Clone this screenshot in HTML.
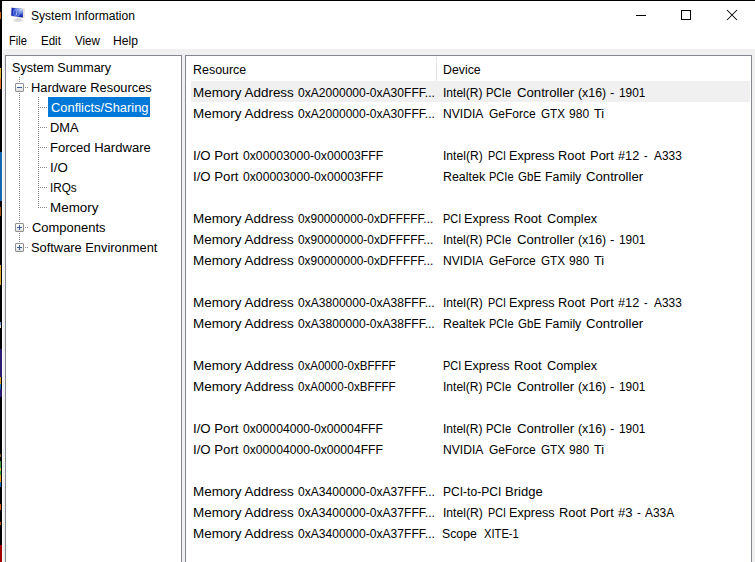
<!DOCTYPE html>
<html><head><meta charset="utf-8"><style>
*{margin:0;padding:0;box-sizing:border-box}
html,body{width:755px;height:562px;overflow:hidden;background:#f0f0f0}
body{position:relative;font-family:"Liberation Sans",sans-serif;font-size:12px;color:#000}
.a{position:absolute}
.t{position:absolute;white-space:pre;transform-origin:0 0;line-height:14px}
</style></head><body>
<div class="a" style="left:0;top:0;width:755px;height:49px;background:#fff"></div>
<div class="a" style="left:0;top:0;width:755px;height:1px;background:#000"></div>
<div class="a" style="left:0;top:0;width:2px;height:562px;background:#000"></div>
<div class="a" style="left:2px;top:49px;width:1px;height:513px;background:#fff"></div>
<div class="a" style="left:5px;top:55px;width:177px;height:520px;border:1px solid #828790;background:#fff"></div>
<div class="a" style="left:185px;top:55px;width:567px;height:520px;border:1px solid #828790;background:#fff"></div>
<div class="a" style="left:436px;top:57px;width:1px;height:24px;background:#e5e5e5"></div>
<div class="a" style="left:191px;top:81px;width:559px;height:21px;background:#f0f0f0"></div>
<div class="a" style="left:48px;top:97px;width:102px;height:20px;background:#0078d7"></div>
<div class="a" style="left:0px;top:12px;width:1px;height:7px;background:#c06010"></div>
<div class="a" style="left:0px;top:68px;width:1px;height:10px;background:#e0b030"></div>
<div class="a" style="left:0px;top:78px;width:1px;height:11px;background:#e07030"></div>
<div class="a" style="left:0px;top:152px;width:2px;height:49px;background:#1565b0"></div>
<div class="a" style="left:0px;top:207px;width:1px;height:9px;background:#a05010"></div>
<div class="a" style="left:0px;top:265px;width:1px;height:20px;background:#d8a830"></div>
<div class="a" style="left:0px;top:322px;width:1px;height:3px;background:#60a0e0"></div>
<div class="a" style="left:0px;top:325px;width:1px;height:3px;background:#e0d0c0"></div>
<div class="a" style="left:0px;top:349px;width:2px;height:28px;background:#2a1a70"></div>
<div class="a" style="left:0px;top:377px;width:1px;height:7px;background:#d8a030"></div>
<div class="a" style="left:0px;top:384px;width:1px;height:5px;background:#2070c0"></div>
<div class="a" style="left:0px;top:389px;width:2px;height:8px;background:#2a1a70"></div>
<div class="a" style="left:0px;top:454px;width:1px;height:3px;background:#806010"></div>
<div class="a" style="left:0px;top:461px;width:1px;height:7px;background:#30a040"></div>
<div class="a" style="left:0px;top:468px;width:1px;height:3px;background:#d0c040"></div>
<div class="a" style="left:0px;top:471px;width:1px;height:4px;background:#30a040"></div>
<div class="a" style="left:0px;top:475px;width:1px;height:7px;background:#e0a020"></div>
<div class="a" style="left:0px;top:482px;width:1px;height:5px;background:#2070c0"></div>
<div class="a" style="left:0px;top:504px;width:1px;height:6px;background:#d06010"></div>
<div class="a" style="left:0px;top:522px;width:1px;height:3px;background:#c05010"></div>
<div class="a" style="left:0px;top:545px;width:2px;height:17px;background:#a00000"></div>
<svg class="a" style="left:8px;top:5px" width="20" height="20" viewBox="0 0 20 20">
<defs><linearGradient id="scr" x1="0" y1="0.3" x2="1" y2="0.7"><stop offset="0" stop-color="#1828b8"/><stop offset="0.55" stop-color="#2848d0"/><stop offset="1" stop-color="#0818a8"/></linearGradient>
<radialGradient id="hl" cx="0.85" cy="0.15" r="0.75"><stop offset="0" stop-color="#d0dcf8"/><stop offset="0.45" stop-color="#90a8ec" stop-opacity="0.8"/><stop offset="1" stop-color="#4060d8" stop-opacity="0"/></radialGradient>
<radialGradient id="st" cx="0.5" cy="0.4" r="0.6"><stop offset="0" stop-color="#cfcfcf"/><stop offset="1" stop-color="#ececec"/></radialGradient></defs>
<ellipse cx="10.2" cy="15.2" rx="4.9" ry="2.0" fill="url(#st)"/>
<rect x="9" y="12.5" width="2.5" height="2" fill="#d8d8d8"/>
<path d="M2.9 2.2 L16.8 3.5 L16.6 13.4 L2.6 11.2 Z" fill="#e6e2da"/>
<path d="M3.6 2.8 L15.0 4.0 L14.8 12.5 L3.2 10.7 Z" fill="url(#scr)"/>
<path d="M3.6 2.8 L15.0 4.0 L14.8 12.5 L3.2 10.7 Z" fill="url(#hl)"/>
<ellipse cx="8.7" cy="7.6" rx="3.3" ry="3.5" fill="none" stroke="#88a4e8" stroke-width="0.8" opacity="0.85"/>
<path d="M7.4 4.6 Q6.4 7.6 7.6 10.6 M10.0 4.6 Q11.0 7.6 9.8 10.6" fill="none" stroke="#7894e0" stroke-width="0.6" opacity="0.7"/>
<path d="M8.5 5.0 L9.1 5.0 L8.9 7.5 L8.4 7.5 Z" fill="#b8c8f4" opacity="0.8"/><path d="M8.4 7.5 L9.0 7.5 L8.8 10.0 L8.2 9.9 Z" fill="#f8faff"/>
</svg>
<div class="a" style="left:636px;top:15px;width:10px;height:1px;background:#000"></div>
<div class="a" style="left:681px;top:10px;width:10px;height:10px;border:1px solid #000"></div>
<svg class="a" style="left:726px;top:9px" width="12" height="12" viewBox="0 0 12 12"><path d="M1 1 L11 11 M11 1 L1 11" stroke="#000" stroke-width="1.05"/></svg>
<svg class="a" style="left:0;top:0" width="755" height="562"><rect x="19" y="77" width="1" height="1" fill="#8a8a8a"/><rect x="19" y="79" width="1" height="1" fill="#8a8a8a"/><rect x="19" y="81" width="1" height="1" fill="#8a8a8a"/><rect x="19" y="93" width="1" height="1" fill="#8a8a8a"/><rect x="19" y="95" width="1" height="1" fill="#8a8a8a"/><rect x="19" y="97" width="1" height="1" fill="#8a8a8a"/><rect x="19" y="99" width="1" height="1" fill="#8a8a8a"/><rect x="19" y="101" width="1" height="1" fill="#8a8a8a"/><rect x="19" y="103" width="1" height="1" fill="#8a8a8a"/><rect x="19" y="105" width="1" height="1" fill="#8a8a8a"/><rect x="19" y="107" width="1" height="1" fill="#8a8a8a"/><rect x="19" y="109" width="1" height="1" fill="#8a8a8a"/><rect x="19" y="111" width="1" height="1" fill="#8a8a8a"/><rect x="19" y="113" width="1" height="1" fill="#8a8a8a"/><rect x="19" y="115" width="1" height="1" fill="#8a8a8a"/><rect x="19" y="117" width="1" height="1" fill="#8a8a8a"/><rect x="19" y="119" width="1" height="1" fill="#8a8a8a"/><rect x="19" y="121" width="1" height="1" fill="#8a8a8a"/><rect x="19" y="123" width="1" height="1" fill="#8a8a8a"/><rect x="19" y="125" width="1" height="1" fill="#8a8a8a"/><rect x="19" y="127" width="1" height="1" fill="#8a8a8a"/><rect x="19" y="129" width="1" height="1" fill="#8a8a8a"/><rect x="19" y="131" width="1" height="1" fill="#8a8a8a"/><rect x="19" y="133" width="1" height="1" fill="#8a8a8a"/><rect x="19" y="135" width="1" height="1" fill="#8a8a8a"/><rect x="19" y="137" width="1" height="1" fill="#8a8a8a"/><rect x="19" y="139" width="1" height="1" fill="#8a8a8a"/><rect x="19" y="141" width="1" height="1" fill="#8a8a8a"/><rect x="19" y="143" width="1" height="1" fill="#8a8a8a"/><rect x="19" y="145" width="1" height="1" fill="#8a8a8a"/><rect x="19" y="147" width="1" height="1" fill="#8a8a8a"/><rect x="19" y="149" width="1" height="1" fill="#8a8a8a"/><rect x="19" y="151" width="1" height="1" fill="#8a8a8a"/><rect x="19" y="153" width="1" height="1" fill="#8a8a8a"/><rect x="19" y="155" width="1" height="1" fill="#8a8a8a"/><rect x="19" y="157" width="1" height="1" fill="#8a8a8a"/><rect x="19" y="159" width="1" height="1" fill="#8a8a8a"/><rect x="19" y="161" width="1" height="1" fill="#8a8a8a"/><rect x="19" y="163" width="1" height="1" fill="#8a8a8a"/><rect x="19" y="165" width="1" height="1" fill="#8a8a8a"/><rect x="19" y="167" width="1" height="1" fill="#8a8a8a"/><rect x="19" y="169" width="1" height="1" fill="#8a8a8a"/><rect x="19" y="171" width="1" height="1" fill="#8a8a8a"/><rect x="19" y="173" width="1" height="1" fill="#8a8a8a"/><rect x="19" y="175" width="1" height="1" fill="#8a8a8a"/><rect x="19" y="177" width="1" height="1" fill="#8a8a8a"/><rect x="19" y="179" width="1" height="1" fill="#8a8a8a"/><rect x="19" y="181" width="1" height="1" fill="#8a8a8a"/><rect x="19" y="183" width="1" height="1" fill="#8a8a8a"/><rect x="19" y="185" width="1" height="1" fill="#8a8a8a"/><rect x="19" y="187" width="1" height="1" fill="#8a8a8a"/><rect x="19" y="189" width="1" height="1" fill="#8a8a8a"/><rect x="19" y="191" width="1" height="1" fill="#8a8a8a"/><rect x="19" y="193" width="1" height="1" fill="#8a8a8a"/><rect x="19" y="195" width="1" height="1" fill="#8a8a8a"/><rect x="19" y="197" width="1" height="1" fill="#8a8a8a"/><rect x="19" y="199" width="1" height="1" fill="#8a8a8a"/><rect x="19" y="201" width="1" height="1" fill="#8a8a8a"/><rect x="19" y="203" width="1" height="1" fill="#8a8a8a"/><rect x="19" y="205" width="1" height="1" fill="#8a8a8a"/><rect x="19" y="207" width="1" height="1" fill="#8a8a8a"/><rect x="19" y="209" width="1" height="1" fill="#8a8a8a"/><rect x="19" y="211" width="1" height="1" fill="#8a8a8a"/><rect x="19" y="213" width="1" height="1" fill="#8a8a8a"/><rect x="19" y="215" width="1" height="1" fill="#8a8a8a"/><rect x="19" y="217" width="1" height="1" fill="#8a8a8a"/><rect x="19" y="219" width="1" height="1" fill="#8a8a8a"/><rect x="19" y="221" width="1" height="1" fill="#8a8a8a"/><rect x="19" y="233" width="1" height="1" fill="#8a8a8a"/><rect x="19" y="235" width="1" height="1" fill="#8a8a8a"/><rect x="19" y="237" width="1" height="1" fill="#8a8a8a"/><rect x="19" y="239" width="1" height="1" fill="#8a8a8a"/><rect x="19" y="241" width="1" height="1" fill="#8a8a8a"/><rect x="38" y="97" width="1" height="1" fill="#8a8a8a"/><rect x="38" y="99" width="1" height="1" fill="#8a8a8a"/><rect x="38" y="101" width="1" height="1" fill="#8a8a8a"/><rect x="38" y="103" width="1" height="1" fill="#8a8a8a"/><rect x="38" y="105" width="1" height="1" fill="#8a8a8a"/><rect x="38" y="107" width="1" height="1" fill="#8a8a8a"/><rect x="38" y="109" width="1" height="1" fill="#8a8a8a"/><rect x="38" y="111" width="1" height="1" fill="#8a8a8a"/><rect x="38" y="113" width="1" height="1" fill="#8a8a8a"/><rect x="38" y="115" width="1" height="1" fill="#8a8a8a"/><rect x="38" y="117" width="1" height="1" fill="#8a8a8a"/><rect x="38" y="119" width="1" height="1" fill="#8a8a8a"/><rect x="38" y="121" width="1" height="1" fill="#8a8a8a"/><rect x="38" y="123" width="1" height="1" fill="#8a8a8a"/><rect x="38" y="125" width="1" height="1" fill="#8a8a8a"/><rect x="38" y="127" width="1" height="1" fill="#8a8a8a"/><rect x="38" y="129" width="1" height="1" fill="#8a8a8a"/><rect x="38" y="131" width="1" height="1" fill="#8a8a8a"/><rect x="38" y="133" width="1" height="1" fill="#8a8a8a"/><rect x="38" y="135" width="1" height="1" fill="#8a8a8a"/><rect x="38" y="137" width="1" height="1" fill="#8a8a8a"/><rect x="38" y="139" width="1" height="1" fill="#8a8a8a"/><rect x="38" y="141" width="1" height="1" fill="#8a8a8a"/><rect x="38" y="143" width="1" height="1" fill="#8a8a8a"/><rect x="38" y="145" width="1" height="1" fill="#8a8a8a"/><rect x="38" y="147" width="1" height="1" fill="#8a8a8a"/><rect x="38" y="149" width="1" height="1" fill="#8a8a8a"/><rect x="38" y="151" width="1" height="1" fill="#8a8a8a"/><rect x="38" y="153" width="1" height="1" fill="#8a8a8a"/><rect x="38" y="155" width="1" height="1" fill="#8a8a8a"/><rect x="38" y="157" width="1" height="1" fill="#8a8a8a"/><rect x="38" y="159" width="1" height="1" fill="#8a8a8a"/><rect x="38" y="161" width="1" height="1" fill="#8a8a8a"/><rect x="38" y="163" width="1" height="1" fill="#8a8a8a"/><rect x="38" y="165" width="1" height="1" fill="#8a8a8a"/><rect x="38" y="167" width="1" height="1" fill="#8a8a8a"/><rect x="38" y="169" width="1" height="1" fill="#8a8a8a"/><rect x="38" y="171" width="1" height="1" fill="#8a8a8a"/><rect x="38" y="173" width="1" height="1" fill="#8a8a8a"/><rect x="38" y="175" width="1" height="1" fill="#8a8a8a"/><rect x="38" y="177" width="1" height="1" fill="#8a8a8a"/><rect x="38" y="179" width="1" height="1" fill="#8a8a8a"/><rect x="38" y="181" width="1" height="1" fill="#8a8a8a"/><rect x="38" y="183" width="1" height="1" fill="#8a8a8a"/><rect x="38" y="185" width="1" height="1" fill="#8a8a8a"/><rect x="38" y="187" width="1" height="1" fill="#8a8a8a"/><rect x="38" y="189" width="1" height="1" fill="#8a8a8a"/><rect x="38" y="191" width="1" height="1" fill="#8a8a8a"/><rect x="38" y="193" width="1" height="1" fill="#8a8a8a"/><rect x="38" y="195" width="1" height="1" fill="#8a8a8a"/><rect x="38" y="197" width="1" height="1" fill="#8a8a8a"/><rect x="38" y="199" width="1" height="1" fill="#8a8a8a"/><rect x="38" y="201" width="1" height="1" fill="#8a8a8a"/><rect x="38" y="203" width="1" height="1" fill="#8a8a8a"/><rect x="38" y="205" width="1" height="1" fill="#8a8a8a"/><rect x="38" y="207" width="1" height="1" fill="#8a8a8a"/><rect x="40" y="107" width="1" height="1" fill="#8a8a8a"/><rect x="42" y="107" width="1" height="1" fill="#8a8a8a"/><rect x="44" y="107" width="1" height="1" fill="#8a8a8a"/><rect x="46" y="107" width="1" height="1" fill="#8a8a8a"/><rect x="40" y="127" width="1" height="1" fill="#8a8a8a"/><rect x="42" y="127" width="1" height="1" fill="#8a8a8a"/><rect x="44" y="127" width="1" height="1" fill="#8a8a8a"/><rect x="46" y="127" width="1" height="1" fill="#8a8a8a"/><rect x="40" y="147" width="1" height="1" fill="#8a8a8a"/><rect x="42" y="147" width="1" height="1" fill="#8a8a8a"/><rect x="44" y="147" width="1" height="1" fill="#8a8a8a"/><rect x="46" y="147" width="1" height="1" fill="#8a8a8a"/><rect x="40" y="167" width="1" height="1" fill="#8a8a8a"/><rect x="42" y="167" width="1" height="1" fill="#8a8a8a"/><rect x="44" y="167" width="1" height="1" fill="#8a8a8a"/><rect x="46" y="167" width="1" height="1" fill="#8a8a8a"/><rect x="40" y="187" width="1" height="1" fill="#8a8a8a"/><rect x="42" y="187" width="1" height="1" fill="#8a8a8a"/><rect x="44" y="187" width="1" height="1" fill="#8a8a8a"/><rect x="46" y="187" width="1" height="1" fill="#8a8a8a"/><rect x="40" y="207" width="1" height="1" fill="#8a8a8a"/><rect x="42" y="207" width="1" height="1" fill="#8a8a8a"/><rect x="44" y="207" width="1" height="1" fill="#8a8a8a"/><rect x="46" y="207" width="1" height="1" fill="#8a8a8a"/><rect x="25" y="87" width="1" height="1" fill="#8a8a8a"/><rect x="27" y="87" width="1" height="1" fill="#8a8a8a"/><rect x="25" y="227" width="1" height="1" fill="#8a8a8a"/><rect x="27" y="227" width="1" height="1" fill="#8a8a8a"/><rect x="25" y="247" width="1" height="1" fill="#8a8a8a"/><rect x="27" y="247" width="1" height="1" fill="#8a8a8a"/></svg>
<div class="a" style="left:15px;top:83px;width:9px;height:9px;border:1px solid #919191;border-radius:1px;background:linear-gradient(#fff 0%,#f4f4f4 50%,#dcdcdc 100%)"></div>
<div class="a" style="left:17px;top:87px;width:5px;height:1px;background:#3c5aa0"></div>
<div class="a" style="left:15px;top:223px;width:9px;height:9px;border:1px solid #919191;border-radius:1px;background:linear-gradient(#fff 0%,#f4f4f4 50%,#dcdcdc 100%)"></div>
<div class="a" style="left:17px;top:227px;width:5px;height:1px;background:#3c5aa0"></div>
<div class="a" style="left:19px;top:225px;width:1px;height:5px;background:#3c5aa0"></div>
<div class="a" style="left:15px;top:243px;width:9px;height:9px;border:1px solid #919191;border-radius:1px;background:linear-gradient(#fff 0%,#f4f4f4 50%,#dcdcdc 100%)"></div>
<div class="a" style="left:17px;top:247px;width:5px;height:1px;background:#3c5aa0"></div>
<div class="a" style="left:19px;top:245px;width:1px;height:5px;background:#3c5aa0"></div>
<div class="t" style="left:30.67px;top:9px;transform:scaleX(1.0049);color:#000">System Information</div>
<div class="t" style="left:8.65px;top:34px;transform:scaleX(0.9291);color:#000">File</div>
<div class="t" style="left:41.38px;top:34px;transform:scaleX(0.9593);color:#000">Edit</div>
<div class="t" style="left:74.71px;top:34px;transform:scaleX(0.9656);color:#000">View</div>
<div class="t" style="left:113.49px;top:34px;transform:scaleX(1.0130);color:#000">Help</div>
<div class="t" style="left:192.59px;top:63px;transform:scaleX(1.0370);color:#000">Resource</div>
<div class="t" style="left:442.77px;top:63px;transform:scaleX(1.0259);color:#000">Device</div>
<div class="t" style="left:193.17px;top:86px;transform:scaleX(1.1197);color:#000">Memory Address</div>
<div class="t" style="left:298.06px;top:86px;transform:scaleX(1.0057);color:#000">0xA2000000-0xA30FFF...</div>
<div class="t" style="left:442.75px;top:86px;transform:scaleX(1.0033);color:#000">Intel(R)</div>
<div class="t" style="left:486.35px;top:86px;transform:scaleX(0.9461);color:#000">PCIe</div>
<div class="t" style="left:516.57px;top:86px;transform:scaleX(1.0990);color:#000">Controller</div>
<div class="t" style="left:577.85px;top:86px;transform:scaleX(1.0294);color:#000">(x16)</div>
<div class="t" style="left:610.21px;top:86px;transform:scaleX(1.0842);color:#000">-</div>
<div class="t" style="left:618.80px;top:86px;transform:scaleX(0.9893);color:#000">1901</div>
<div class="t" style="left:193.17px;top:107px;transform:scaleX(1.1197);color:#000">Memory Address</div>
<div class="t" style="left:298.06px;top:107px;transform:scaleX(1.0057);color:#000">0xA2000000-0xA30FFF...</div>
<div class="t" style="left:443.26px;top:107px;transform:scaleX(1.0091);color:#000">NVIDIA</div>
<div class="t" style="left:488.54px;top:107px;transform:scaleX(0.9998);color:#000">GeForce</div>
<div class="t" style="left:540.60px;top:107px;transform:scaleX(0.9758);color:#000">GTX</div>
<div class="t" style="left:568.50px;top:107px;transform:scaleX(1.0052);color:#000">980</div>
<div class="t" style="left:593.64px;top:107px;transform:scaleX(1.0592);color:#000">Ti</div>
<div class="t" style="left:192.74px;top:149px;transform:scaleX(1.1014);color:#000">I/O Port</div>
<div class="t" style="left:243.06px;top:149px;transform:scaleX(1.0145);color:#000">0x00003000-0x00003FFF</div>
<div class="t" style="left:442.75px;top:149px;transform:scaleX(1.0092);color:#000">Intel(R)</div>
<div class="t" style="left:487.51px;top:149px;transform:scaleX(0.8980);color:#000">PCI</div>
<div class="t" style="left:509.16px;top:149px;transform:scaleX(1.0542);color:#000">Express</div>
<div class="t" style="left:558.45px;top:149px;transform:scaleX(1.0724);color:#000">Root</div>
<div class="t" style="left:590.28px;top:149px;transform:scaleX(1.0812);color:#000">Port</div>
<div class="t" style="left:618.44px;top:149px;transform:scaleX(1.0599);color:#000">#12</div>
<div class="t" style="left:644.29px;top:149px;transform:scaleX(0.8807);color:#000">-</div>
<div class="t" style="left:653.76px;top:149px;transform:scaleX(0.9909);color:#000">A333</div>
<div class="t" style="left:192.74px;top:170px;transform:scaleX(1.1014);color:#000">I/O Port</div>
<div class="t" style="left:243.06px;top:170px;transform:scaleX(1.0145);color:#000">0x00003000-0x00003FFF</div>
<div class="t" style="left:443.11px;top:170px;transform:scaleX(1.0347);color:#000">Realtek</div>
<div class="t" style="left:488.58px;top:170px;transform:scaleX(0.9210);color:#000">PCIe</div>
<div class="t" style="left:518.45px;top:170px;transform:scaleX(0.9619);color:#000">GbE</div>
<div class="t" style="left:545.25px;top:170px;transform:scaleX(1.0269);color:#000">Family</div>
<div class="t" style="left:585.65px;top:170px;transform:scaleX(1.0977);color:#000">Controller</div>
<div class="t" style="left:193.17px;top:212px;transform:scaleX(1.1197);color:#000">Memory Address</div>
<div class="t" style="left:298.06px;top:212px;transform:scaleX(0.9893);color:#000">0x90000000-0xDFFFFF...</div>
<div class="t" style="left:442.54px;top:212px;transform:scaleX(0.9149);color:#000">PCI</div>
<div class="t" style="left:464.45px;top:212px;transform:scaleX(1.0542);color:#000">Express</div>
<div class="t" style="left:513.90px;top:212px;transform:scaleX(1.0884);color:#000">Root</div>
<div class="t" style="left:546.51px;top:212px;transform:scaleX(1.0578);color:#000">Complex</div>
<div class="t" style="left:193.17px;top:233px;transform:scaleX(1.1197);color:#000">Memory Address</div>
<div class="t" style="left:298.06px;top:233px;transform:scaleX(0.9893);color:#000">0x90000000-0xDFFFFF...</div>
<div class="t" style="left:442.75px;top:233px;transform:scaleX(1.0033);color:#000">Intel(R)</div>
<div class="t" style="left:486.35px;top:233px;transform:scaleX(0.9461);color:#000">PCIe</div>
<div class="t" style="left:516.57px;top:233px;transform:scaleX(1.0990);color:#000">Controller</div>
<div class="t" style="left:577.85px;top:233px;transform:scaleX(1.0294);color:#000">(x16)</div>
<div class="t" style="left:610.21px;top:233px;transform:scaleX(1.0842);color:#000">-</div>
<div class="t" style="left:618.80px;top:233px;transform:scaleX(0.9893);color:#000">1901</div>
<div class="t" style="left:193.17px;top:254px;transform:scaleX(1.1197);color:#000">Memory Address</div>
<div class="t" style="left:298.06px;top:254px;transform:scaleX(0.9893);color:#000">0x90000000-0xDFFFFF...</div>
<div class="t" style="left:443.26px;top:254px;transform:scaleX(1.0091);color:#000">NVIDIA</div>
<div class="t" style="left:488.54px;top:254px;transform:scaleX(0.9998);color:#000">GeForce</div>
<div class="t" style="left:540.60px;top:254px;transform:scaleX(0.9758);color:#000">GTX</div>
<div class="t" style="left:568.50px;top:254px;transform:scaleX(1.0052);color:#000">980</div>
<div class="t" style="left:593.64px;top:254px;transform:scaleX(1.0592);color:#000">Ti</div>
<div class="t" style="left:193.17px;top:296px;transform:scaleX(1.1197);color:#000">Memory Address</div>
<div class="t" style="left:298.06px;top:296px;transform:scaleX(1.0046);color:#000">0xA3800000-0xA38FFF...</div>
<div class="t" style="left:442.75px;top:296px;transform:scaleX(1.0092);color:#000">Intel(R)</div>
<div class="t" style="left:487.51px;top:296px;transform:scaleX(0.8980);color:#000">PCI</div>
<div class="t" style="left:509.16px;top:296px;transform:scaleX(1.0542);color:#000">Express</div>
<div class="t" style="left:558.45px;top:296px;transform:scaleX(1.0724);color:#000">Root</div>
<div class="t" style="left:590.28px;top:296px;transform:scaleX(1.0812);color:#000">Port</div>
<div class="t" style="left:618.44px;top:296px;transform:scaleX(1.0599);color:#000">#12</div>
<div class="t" style="left:644.29px;top:296px;transform:scaleX(0.8807);color:#000">-</div>
<div class="t" style="left:653.76px;top:296px;transform:scaleX(0.9909);color:#000">A333</div>
<div class="t" style="left:193.17px;top:317px;transform:scaleX(1.1197);color:#000">Memory Address</div>
<div class="t" style="left:298.06px;top:317px;transform:scaleX(1.0046);color:#000">0xA3800000-0xA38FFF...</div>
<div class="t" style="left:443.11px;top:317px;transform:scaleX(1.0347);color:#000">Realtek</div>
<div class="t" style="left:488.58px;top:317px;transform:scaleX(0.9210);color:#000">PCIe</div>
<div class="t" style="left:518.45px;top:317px;transform:scaleX(0.9619);color:#000">GbE</div>
<div class="t" style="left:545.25px;top:317px;transform:scaleX(1.0269);color:#000">Family</div>
<div class="t" style="left:585.65px;top:317px;transform:scaleX(1.0977);color:#000">Controller</div>
<div class="t" style="left:193.17px;top:359px;transform:scaleX(1.1197);color:#000">Memory Address</div>
<div class="t" style="left:298.21px;top:359px;transform:scaleX(0.9637);color:#000">0xA0000-0xBFFFF</div>
<div class="t" style="left:442.54px;top:359px;transform:scaleX(0.9149);color:#000">PCI</div>
<div class="t" style="left:464.45px;top:359px;transform:scaleX(1.0542);color:#000">Express</div>
<div class="t" style="left:513.90px;top:359px;transform:scaleX(1.0884);color:#000">Root</div>
<div class="t" style="left:546.51px;top:359px;transform:scaleX(1.0578);color:#000">Complex</div>
<div class="t" style="left:193.17px;top:380px;transform:scaleX(1.1197);color:#000">Memory Address</div>
<div class="t" style="left:298.21px;top:380px;transform:scaleX(0.9637);color:#000">0xA0000-0xBFFFF</div>
<div class="t" style="left:442.75px;top:380px;transform:scaleX(1.0033);color:#000">Intel(R)</div>
<div class="t" style="left:486.35px;top:380px;transform:scaleX(0.9461);color:#000">PCIe</div>
<div class="t" style="left:516.57px;top:380px;transform:scaleX(1.0990);color:#000">Controller</div>
<div class="t" style="left:577.85px;top:380px;transform:scaleX(1.0294);color:#000">(x16)</div>
<div class="t" style="left:610.21px;top:380px;transform:scaleX(1.0842);color:#000">-</div>
<div class="t" style="left:618.80px;top:380px;transform:scaleX(0.9893);color:#000">1901</div>
<div class="t" style="left:192.74px;top:422px;transform:scaleX(1.1014);color:#000">I/O Port</div>
<div class="t" style="left:243.06px;top:422px;transform:scaleX(1.0133);color:#000">0x00004000-0x00004FFF</div>
<div class="t" style="left:442.75px;top:422px;transform:scaleX(1.0033);color:#000">Intel(R)</div>
<div class="t" style="left:486.35px;top:422px;transform:scaleX(0.9461);color:#000">PCIe</div>
<div class="t" style="left:516.57px;top:422px;transform:scaleX(1.0990);color:#000">Controller</div>
<div class="t" style="left:577.85px;top:422px;transform:scaleX(1.0294);color:#000">(x16)</div>
<div class="t" style="left:610.21px;top:422px;transform:scaleX(1.0842);color:#000">-</div>
<div class="t" style="left:618.80px;top:422px;transform:scaleX(0.9893);color:#000">1901</div>
<div class="t" style="left:192.74px;top:443px;transform:scaleX(1.1014);color:#000">I/O Port</div>
<div class="t" style="left:243.06px;top:443px;transform:scaleX(1.0133);color:#000">0x00004000-0x00004FFF</div>
<div class="t" style="left:443.26px;top:443px;transform:scaleX(1.0091);color:#000">NVIDIA</div>
<div class="t" style="left:488.54px;top:443px;transform:scaleX(0.9998);color:#000">GeForce</div>
<div class="t" style="left:540.60px;top:443px;transform:scaleX(0.9758);color:#000">GTX</div>
<div class="t" style="left:568.50px;top:443px;transform:scaleX(1.0052);color:#000">980</div>
<div class="t" style="left:593.64px;top:443px;transform:scaleX(1.0592);color:#000">Ti</div>
<div class="t" style="left:193.17px;top:485px;transform:scaleX(1.1197);color:#000">Memory Address</div>
<div class="t" style="left:298.06px;top:485px;transform:scaleX(1.0057);color:#000">0xA3400000-0xA37FFF...</div>
<div class="t" style="left:443.29px;top:485px;transform:scaleX(1.0044);color:#000">PCI-to-PCI</div>
<div class="t" style="left:505.25px;top:485px;transform:scaleX(1.0871);color:#000">Bridge</div>
<div class="t" style="left:193.17px;top:506px;transform:scaleX(1.1197);color:#000">Memory Address</div>
<div class="t" style="left:298.06px;top:506px;transform:scaleX(1.0057);color:#000">0xA3400000-0xA37FFF...</div>
<div class="t" style="left:442.75px;top:506px;transform:scaleX(1.0092);color:#000">Intel(R)</div>
<div class="t" style="left:487.51px;top:506px;transform:scaleX(0.8980);color:#000">PCI</div>
<div class="t" style="left:509.16px;top:506px;transform:scaleX(1.0542);color:#000">Express</div>
<div class="t" style="left:558.89px;top:506px;transform:scaleX(1.0726);color:#000">Root</div>
<div class="t" style="left:590.15px;top:506px;transform:scaleX(1.0812);color:#000">Port</div>
<div class="t" style="left:617.80px;top:506px;transform:scaleX(1.0925);color:#000">#3</div>
<div class="t" style="left:637.23px;top:506px;transform:scaleX(0.9355);color:#000">-</div>
<div class="t" style="left:645.27px;top:506px;transform:scaleX(0.9925);color:#000">A33A</div>
<div class="t" style="left:193.17px;top:527px;transform:scaleX(1.1197);color:#000">Memory Address</div>
<div class="t" style="left:298.06px;top:527px;transform:scaleX(1.0057);color:#000">0xA3400000-0xA37FFF...</div>
<div class="t" style="left:442.49px;top:527px;transform:scaleX(1.0238);color:#000">Scope</div>
<div class="t" style="left:483.52px;top:527px;transform:scaleX(0.9324);color:#000">XITE-1</div>
<div class="t" style="left:11.86px;top:61px;transform:scaleX(1.0464);color:#000">System Summary</div>
<div class="t" style="left:30.59px;top:81px;transform:scaleX(1.0713);color:#000">Hardware Resources</div>
<div class="t" style="left:50.95px;top:101px;transform:scaleX(1.0752);color:#fff">Conflicts/Sharing</div>
<div class="t" style="left:49.88px;top:121px;transform:scaleX(1.0753);color:#000">DMA</div>
<div class="t" style="left:49.84px;top:141px;transform:scaleX(1.0866);color:#000">Forced Hardware</div>
<div class="t" style="left:50.15px;top:161px;transform:scaleX(1.1074);color:#000">I/O</div>
<div class="t" style="left:50.08px;top:181px;transform:scaleX(0.9780);color:#000">IRQs</div>
<div class="t" style="left:49.96px;top:201px;transform:scaleX(1.1181);color:#000">Memory</div>
<div class="t" style="left:31.73px;top:221px;transform:scaleX(1.0796);color:#000">Components</div>
<div class="t" style="left:31.49px;top:241px;transform:scaleX(1.0709);color:#000">Software Environment</div>
</body></html>
